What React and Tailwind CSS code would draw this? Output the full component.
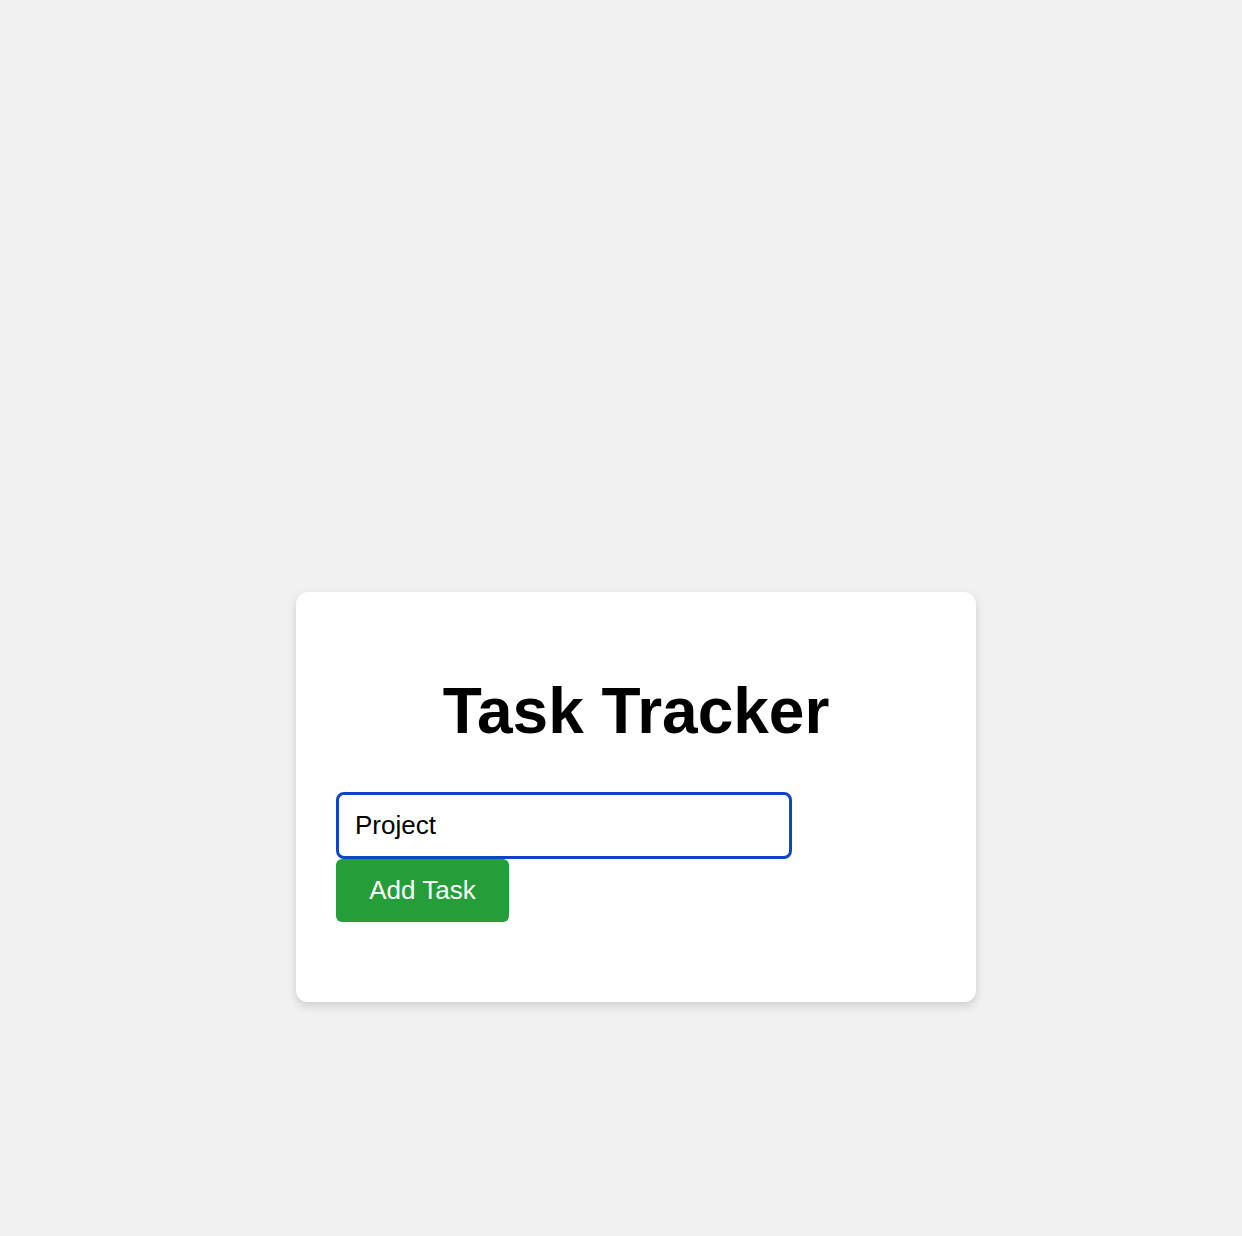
import React, { useState } from "react";

const App = () => {
  const [task, setTask] = useState("Project");

  return (
    <div className="min-h-screen bg-[#f1f1f1] flex justify-center items-start pt-[592px] pl-[30px] font-['Liberation_Sans',Arial,sans-serif]">
      {/* Card */}
      <div className="w-[680px] bg-white rounded-xl shadow-[0_4px_10px_rgba(0,0,0,0.15)] px-10 pt-10 pb-20">
        <h1 className="text-[64px] leading-[74px] font-bold text-black text-center mt-[42px] mb-[44px]">
          Task Tracker
        </h1>
        <div className="flex flex-col items-start">
          <input
            type="text"
            value={task}
            onChange={(e) => setTask(e.target.value)}
            className="w-[456px] h-[67px] border-[3px] border-[#0b47c1] rounded-lg px-4 text-[26px] text-black outline-none bg-white"
          />
          <button className="w-[173px] h-[63px] bg-[#259e3a] text-white text-[26px] rounded-md">
            Add Task
          </button>
        </div>
      </div>
    </div>
  );
};

export default App;
